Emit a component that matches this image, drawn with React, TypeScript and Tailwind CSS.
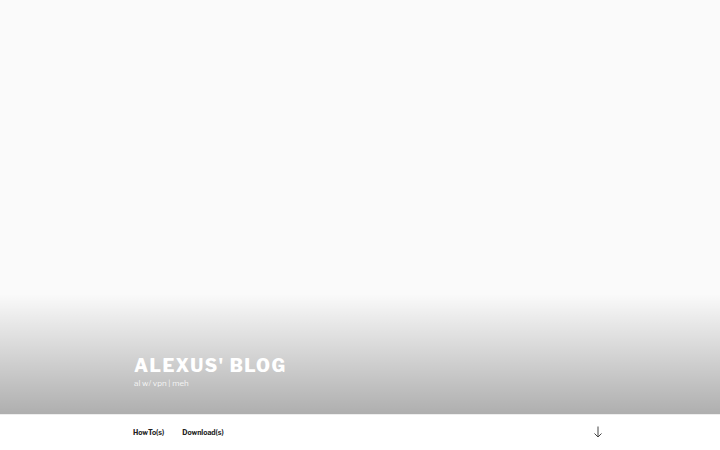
import * as React from 'react';

const font = { fontFamily: '"Libre Franklin", "Liberation Sans", Arial, sans-serif' };

function ArrowDown() {
  return (
    <svg width="10" height="12" viewBox="0 0 10 12" fill="none" stroke="#444" strokeWidth="1">
      <path d="M5 0.5V11" />
      <path d="M1.5 7.5L5 11L8.5 7.5" />
    </svg>
  );
}

export default function App() {
  return (
    <div className="flex h-[450px] w-[720px] flex-col overflow-hidden bg-white" style={font}>
      <header className="relative flex h-[414px] flex-col justify-end bg-[#fafafa]">
        <div className="absolute inset-x-0 bottom-0 h-[120px] bg-gradient-to-b from-[rgba(0,0,0,0)] to-[rgba(0,0,0,0.3)]" />
        <div className="relative z-10 px-[134px] pb-[25px]">
          <h1 className="text-[18px] font-extrabold uppercase leading-[24px] tracking-[0.08em] text-white">
            Alexus' Blog
          </h1>
          <p className="mt-[-1px] text-[8px] leading-[12px] text-[#f4f4f4]">al w/ vpn | meh</p>
        </div>
      </header>
      <nav className="flex h-[36px] items-center border-t border-[#eeeeee] bg-white pl-[133px] pr-[117px]">
        <ul className="flex gap-[18px] pt-[2px] text-[7px] font-bold text-[#222]">
          <li>HowTo(s)</li>
          <li>Download(s)</li>
        </ul>
        <div className="ml-auto flex items-center pb-[1px]">
          <ArrowDown />
        </div>
      </nav>
    </div>
  );
}
